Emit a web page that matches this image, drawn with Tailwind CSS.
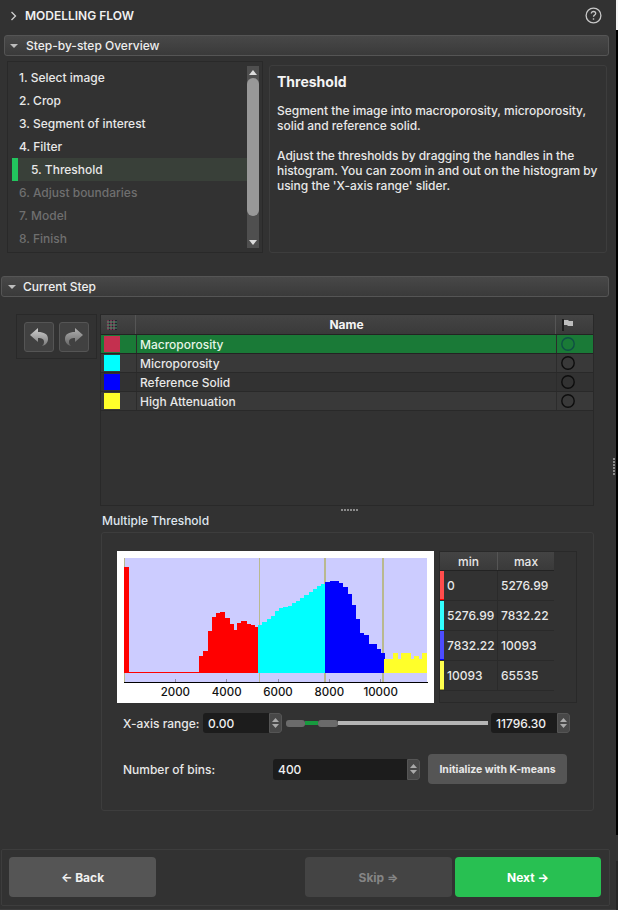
<!DOCTYPE html>
<html lang="en">
<head>
    <meta charset="UTF-8">
    <title>Modelling Flow</title>
    <script src="https://cdn.jsdelivr.net/npm/@tailwindcss/browser@4"></script>
</head>
<body class="bg-[#323232]">
    <div class="relative w-[618px] h-[910px] overflow-hidden bg-[#323232] text-[12px] leading-[15px] font-medium text-[#e8e8e8] font-['Inter','Liberation_Sans',sans-serif]">
        <!-- Title -->
        <div class="flex items-center h-[31px] pl-[10px] pr-[16px]">
            <svg width="8" height="10" viewBox="0 0 8 10" class="mr-[7px]"><path d="M1.5 1l4 4-4 4" fill="none" stroke="#cfcfcf" stroke-width="1.3"/></svg>
            <span class="font-semibold text-[#f0f0f0]">MODELLING FLOW</span>
            <svg width="17" height="17" viewBox="0 0 17 17" class="ml-auto"><circle cx="8.5" cy="8.5" r="7.4" fill="none" stroke="#c8c8c8" stroke-width="1.3"/><path d="M6.3 6.6c0-1.3 1-2.1 2.2-2.1s2.2.8 2.2 2c0 1.500-2.200 1.600-2.200 3.300" fill="none" stroke="#c8c8c8" stroke-width="1.300"/><rect x="7.800" y="11.300" width="1.400" height="1.400" fill="#c8c8c8"/></svg>
        </div>

        <!-- Step-by-step Overview -->
        <div class="flex items-center h-[21px] mt-[4px] ml-[4px] w-[605px] rounded-[3px] border border-[#555] bg-gradient-to-b from-[#484848] to-[#3a3a3a]">
            <svg width="8" height="4" viewBox="0 0 8 4" class="ml-[5px] mr-[8px]"><path d="M0 0h8L4 4z" fill="#bdbdbd"/></svg>
            <span class="text-[#eeeeee]">Step-by-step Overview</span>
        </div>
        <div class="flex mt-[5px] ml-[7px] h-[192px]">
            <div class="flex w-[256px] border border-[#292929] pl-[4px] pr-[3px] py-[4px]">
                <ul class="flex-1 flex flex-col">
                    <li class="h-[23px] shrink-0 flex items-center pl-[7px]">1. Select image</li>
                    <li class="h-[23px] shrink-0 flex items-center pl-[7px]">2. Crop</li>
                    <li class="h-[23px] shrink-0 flex items-center pl-[7px]">3. Segment of interest</li>
                    <li class="h-[23px] shrink-0 flex items-center pl-[7px]">4. Filter</li>
                    <li class="h-[23px] shrink-0 flex items-center pl-[13px] bg-[#394039] border-l-[6px] border-[#22c55e]">5. Threshold</li>
                    <li class="h-[23px] shrink-0 flex items-center pl-[7px] text-[#6f6f6f]">6. Adjust boundaries</li>
                    <li class="h-[23px] shrink-0 flex items-center pl-[7px] text-[#6f6f6f]">7. Model</li>
                    <li class="h-[23px] shrink-0 flex items-center pl-[7px] text-[#6f6f6f]">8. Finish</li>
                </ul>
                <div class="flex flex-col w-[12px] h-[182px] bg-[#4f4f4f]">
                    <div class="h-[12px] flex items-center justify-center"><svg width="8" height="5" viewBox="0 0 8 5"><path d="M4 0l4 5H0z" fill="#dcdcdc"/></svg></div>
                    <div class="h-[138px] rounded-[6px] bg-[#989898]"></div>
                    <div class="mt-auto h-[12px] flex items-center justify-center"><svg width="8" height="5" viewBox="0 0 8 5"><path d="M0 0h8L4 5z" fill="#dcdcdc"/></svg></div>
                </div>
            </div>
            <div class="w-[338px] h-[188px] mt-[4px] ml-[6px] rounded-[3px] border border-[#3d3d3d] pl-[7px] pt-[6px]">
                <h2 class="text-[14px] leading-[20px] font-bold text-[#f4f4f4]">Threshold</h2>
                <p class="mt-[11px] w-[320px] tracking-[-0.03px]">Segment the image into macroporosity, microporosity, solid and reference solid.</p>
                <p class="mt-[15px] w-[325px] tracking-[-0.03px]">Adjust the thresholds by dragging the handles in the histogram. You can zoom in and out on the histogram by using the 'X-axis range' slider.</p>
            </div>
        </div>

        <!-- Current Step -->
        <div class="flex items-center h-[21px] mt-[23px] ml-[1px] w-[608px] rounded-[3px] border border-[#555] bg-gradient-to-b from-[#484848] to-[#3a3a3a]">
            <svg width="8" height="4" viewBox="0 0 8 4" class="ml-[6px] mr-[7px]"><path d="M0 0h8L4 4z" fill="#bdbdbd"/></svg>
            <span class="text-[#eeeeee]">Current Step</span>
        </div>

        <div class="flex mt-[17px] ml-[16px]">
            <div class="flex gap-[5px] w-[81px] h-[45px] border border-[#292929] pl-[7px] pt-[7px]">
                <button class="flex items-center justify-center w-[30px] h-[30px] rounded-[3px] border border-[#555] bg-[#414141]">
                    <svg width="20" height="20" viewBox="0 0 20 20"><defs><linearGradient id="undoFill" x1="0" y1="0" x2="0" y2="1"><stop offset="0" stop-color="#cfcfcf"/><stop offset="1" stop-color="#7a7a7a"/></linearGradient></defs><path d="M9 1L1 8l8 7v-4c4 0 6 1 6 4 0 2-1 3-2 4 4-1 6-4 6-7 0-5-4-7-10-7z" fill="url(#undoFill)"/></svg>
                </button>
                <button class="flex items-center justify-center w-[30px] h-[30px] rounded-[3px] border border-[#555] bg-[#414141]">
                    <svg width="20" height="20" viewBox="0 0 20 20"><defs><linearGradient id="redoFill" x1="0" y1="0" x2="0" y2="1"><stop offset="0" stop-color="#b0b0b0"/><stop offset="1" stop-color="#666666"/></linearGradient></defs><path d="M11 1l8 7-8 7v-4c-4 0-6 1-6 4 0 2 1 3 2 4-4-1-6-4-6-7 0-5 4-7 10-7z" fill="url(#redoFill)"/></svg>
                </button>
            </div>
            <!-- Segment table -->
            <div class="ml-[3px] w-[494px] h-[192px] border border-[#292929]">
                <div class="flex h-[20px] border-b border-[#232323] bg-gradient-to-b from-[#444] to-[#3a3a3a]">
                    <div class="flex items-center w-[35px] pl-[6px] border-r border-[#555]">
                        <svg width="10" height="10" viewBox="0 0 10 10"><rect width="10" height="10" fill="#241f2e"/><path d="M1 0v10M4 0v10M7 0v10" stroke="#c04a70" stroke-width="1"/><path d="M0 2h10M0 5h10M0 8h10" stroke="#4a9a6a" stroke-width="1"/></svg>
                    </div>
                    <div class="flex-1 flex items-center justify-center pl-[2px] font-bold text-[#f4f4f4] border-r border-[#555]">Name</div>
                    <div class="flex items-center w-[37px] pl-[6px]">
                        <svg width="11" height="12" viewBox="0 0 11 12"><rect width="2" height="12" fill="#1c1c1c"/><path d="M2 1h4l1 1h4v5H6L5 6H2z" fill="#bdbdbd"/></svg>
                    </div>
                </div>
                <div class="flex h-[19px] bg-[#1a7a37] border-b border-[#232323]">
                    <div class="w-[36px] pl-[3px] pt-[1px] border-r border-[#2c2c2c]"><div class="w-[16px] h-[16px] bg-[#c4304f]"></div></div>
                    <div class="flex-1 flex items-center pl-[3px] text-[#e6f5e6]">Macroporosity</div>
                    <div class="flex items-center w-[37px] pl-[4px] border-l border-[#2c2c2c]"><svg width="14" height="14" viewBox="0 0 14 14"><circle cx="7" cy="7" r="6.200" fill="none" stroke="#0f4f45" stroke-width="1.400"/></svg></div>
                </div>
                <div class="flex h-[19px] bg-[#393939] border-b border-[#292929]">
                    <div class="w-[36px] pl-[3px] pt-[1px] border-r border-[#2c2c2c]"><div class="w-[16px] h-[16px] bg-[#00ffff]"></div></div>
                    <div class="flex-1 flex items-center pl-[3px]">Microporosity</div>
                    <div class="flex items-center w-[37px] pl-[4px] border-l border-[#2c2c2c]"><svg width="14" height="14" viewBox="0 0 14 14"><circle cx="7" cy="7" r="6.200" fill="none" stroke="#0d0d0d" stroke-width="1.400"/></svg></div>
                </div>
                <div class="flex h-[19px] bg-[#323232] border-b border-[#292929]">
                    <div class="w-[36px] pl-[3px] pt-[1px] border-r border-[#2c2c2c]"><div class="w-[16px] h-[16px] bg-[#0000ff]"></div></div>
                    <div class="flex-1 flex items-center pl-[3px]">Reference Solid</div>
                    <div class="flex items-center w-[37px] pl-[4px] border-l border-[#2c2c2c]"><svg width="14" height="14" viewBox="0 0 14 14"><circle cx="7" cy="7" r="6.200" fill="none" stroke="#0d0d0d" stroke-width="1.400"/></svg></div>
                </div>
                <div class="flex h-[19px] bg-[#393939] border-b border-[#292929]">
                    <div class="w-[36px] pl-[3px] pt-[1px] border-r border-[#2c2c2c]"><div class="w-[16px] h-[16px] bg-[#ffff2a]"></div></div>
                    <div class="flex-1 flex items-center pl-[3px]">High Attenuation</div>
                    <div class="flex items-center w-[37px] pl-[4px] border-l border-[#2c2c2c]"><svg width="14" height="14" viewBox="0 0 14 14"><circle cx="7" cy="7" r="6.200" fill="none" stroke="#0d0d0d" stroke-width="1.400"/></svg></div>
                </div>
            </div>
        </div>

        <!-- Splitter dots -->
        <div class="ml-[341px] mt-[3px] w-[17px] h-[2px] bg-[repeating-linear-gradient(90deg,#8a8a8a_0_2px,transparent_2px_3px)]"></div>

        <div class="ml-[102px] mt-[2px] h-[15px] text-[#dfe6ef]">Multiple Threshold</div>

        <!-- Threshold group -->
        <div class="ml-[101px] mt-[4px] w-[493px] h-[279px] rounded-[3px] border border-[#3d3d3d]">
            <div class="flex mt-[18px] ml-[15px]">
                <svg width="317" height="152" viewBox="51 33 951 456" shape-rendering="crispEdges" class="block">
                    <rect x="51" y="33" width="951" height="456" fill="#fff"/>
                    <rect x="72" y="54" width="909" height="372" fill="#ccccff"/>
                    <path fill="#b9b98f" d="M72 54h3v372h-3zM477 54h3v372h-3zM672 54h6v372h-6zM846 54h6v372h-6z"/>
                    <path fill="#ff0000" d="M73 399V81H87V396H297V348H309V333H324V273H336V231H348V219H360V216H375V234H390V252H402V270H411V249H423V243H441V252H453V255H465V261H474V399z"/>
                    <path fill="#00ffff" d="M474 399V255H486V246H501V237H513V228H525V213H537V204H549V201H564V198H576V189H588V183H600V174H612V165H627V156H639V147H651V138H663V132H675V399z"/>
                    <path fill="#0000ff" d="M675 399V126H690V123H717V129H729V141H744V162H756V195H768V237H780V279H792V285H807V312H831V327H843V339H855V399z"/>
                    <path fill="#ffff2a" d="M852 399V357H879V339H894V357H903V339H933V357H942V348H957V357H966V339H981V399z"/>
                    <path fill="#8f8fa8" d="M225 417h3v9h-3zM378 417h3v9h-3zM534 417h3v9h-3zM687 417h3v9h-3zM841 417h3v9h-3z"/>
                    <rect x="72" y="426" width="912" height="3" fill="#000"/>
                    <g font-family="Inter, sans-serif" font-size="34.500" font-weight="500" fill="#111" text-anchor="middle" shape-rendering="auto">
                        <text x="226" y="467">2000</text>
                        <text x="380" y="467">4000</text>
                        <text x="534" y="467">6000</text>
                        <text x="688" y="467">8000</text>
                        <text x="842" y="467">10000</text>
                    </g>
                </svg>
                <!-- Range table -->
                <div class="ml-[5px] w-[138px] h-[152px] border border-[#292929]">
                    <div class="flex h-[19px] w-[114px] border-b border-[#232323] bg-gradient-to-b from-[#444] to-[#3a3a3a]">
                        <div class="w-[58px] flex items-center justify-center border-r border-[#555]">min</div>
                        <div class="flex-1 flex items-center justify-center">max</div>
                    </div>
                    <div class="flex h-[30px] w-[114px] border-b border-[#2a2a2a]">
                        <div class="w-[4px] bg-[#ff4d4d] border-b border-[#ff0000]"></div>
                        <div class="w-[54px] flex items-center pl-[3px] border-r border-[#2a2a2a]">0</div>
                        <div class="flex-1 flex items-center pl-[3px]">5276.99</div>
                    </div>
                    <div class="flex h-[30px] w-[114px] border-b border-[#2a2a2a]">
                        <div class="w-[4px] bg-[#33ffff] border-b border-[#00ffff]"></div>
                        <div class="w-[54px] flex items-center pl-[3px] border-r border-[#2a2a2a]">5276.99</div>
                        <div class="flex-1 flex items-center pl-[3px]">7832.22</div>
                    </div>
                    <div class="flex h-[30px] w-[114px] border-b border-[#2a2a2a]">
                        <div class="w-[4px] bg-[#4d4dff] border-b border-[#0000ff]"></div>
                        <div class="w-[54px] flex items-center pl-[3px] border-r border-[#2a2a2a]">7832.22</div>
                        <div class="flex-1 flex items-center pl-[3px]">10093</div>
                    </div>
                    <div class="flex h-[30px] w-[114px] border-b border-[#2a2a2a]">
                        <div class="w-[4px] bg-[#ffff4d] border-b border-[#a0a020]"></div>
                        <div class="w-[54px] flex items-center pl-[3px] border-r border-[#2a2a2a]">10093</div>
                        <div class="flex-1 flex items-center pl-[3px]">65535</div>
                    </div>
                </div>
            </div>

            <!-- X-axis range -->
            <div class="flex items-center h-[20px] mt-[10px] ml-[21px]">
                <span class="w-[80px]">X-axis range:</span>
                <div class="flex w-[79px] h-[20px] rounded-[3px] bg-[#1c1c1c] pl-[5px] items-center text-[#f0f0f0]">
                    <span class="flex-1">0.00</span>
                    <div class="w-[13px] h-[20px] rounded-r-[3px] border border-[#555] bg-[#484848] flex flex-col items-center justify-center gap-[2px]">
                        <svg width="7" height="4" viewBox="0 0 7 4"><path d="M3.500 0L7 4H0z" fill="#aaa"/></svg>
                        <svg width="7" height="4" viewBox="0 0 7 4"><path d="M0 0h7L3.500 4z" fill="#aaa"/></svg>
                    </div>
                </div>
                <div class="flex items-center w-[202px] ml-[4px]">
                    <div class="w-[19px] h-[7px] rounded-[3px] bg-[#6b6b6b]"></div>
                    <div class="w-[13px] h-[4px] bg-[#179a3e]"></div>
                    <div class="w-[20px] h-[7px] rounded-[3px] bg-[#6b6b6b]"></div>
                    <div class="flex-1 h-[4px] bg-[#b5b5b5]"></div>
                </div>
                <div class="flex w-[79px] h-[20px] ml-[3px] rounded-[3px] bg-[#1c1c1c] pl-[5px] items-center text-[#f0f0f0]">
                    <span class="flex-1">11796.30</span>
                    <div class="w-[13px] h-[20px] rounded-r-[3px] border border-[#555] bg-[#484848] flex flex-col items-center justify-center gap-[2px]">
                        <svg width="7" height="4" viewBox="0 0 7 4"><path d="M3.500 0L7 4H0z" fill="#aaa"/></svg>
                        <svg width="7" height="4" viewBox="0 0 7 4"><path d="M0 0h7L3.500 4z" fill="#aaa"/></svg>
                    </div>
                </div>
            </div>

            <!-- Number of bins -->
            <div class="flex items-center h-[30px] mt-[21px] ml-[21px]">
                <span class="w-[150px]">Number of bins:</span>
                <div class="flex w-[147px] h-[21px] rounded-[3px] bg-[#1c1c1c] pl-[5px] items-center text-[#f0f0f0]">
                    <span class="flex-1">400</span>
                    <div class="w-[13px] h-[21px] rounded-r-[3px] border border-[#555] bg-[#484848] flex flex-col items-center justify-center gap-[2px]">
                        <svg width="7" height="4" viewBox="0 0 7 4"><path d="M3.500 0L7 4H0z" fill="#aaa"/></svg>
                        <svg width="7" height="4" viewBox="0 0 7 4"><path d="M0 0h7L3.500 4z" fill="#aaa"/></svg>
                    </div>
                </div>
                <button class="w-[139px] h-[30px] ml-[8px] rounded-[4px] bg-[#555555] text-[10.500px] font-bold text-[#e8e8e8]">Initialize with K-means</button>
            </div>
        </div>

        <!-- Footer -->
        <div class="flex mt-[38px] ml-[1px] w-[609px] h-[57px] border border-[#3d3d3d] rounded-[2px] pt-[7px] pl-[7px]">
            <button class="w-[147px] h-[40px] rounded-[4px] bg-[#555555] font-bold text-[#f0f0f0]">← Back</button>
            <button class="w-[147px] h-[40px] ml-[149px] rounded-[4px] bg-[#444444] font-bold text-[#858585]">Skip ⇒</button>
            <button class="w-[146px] h-[40px] ml-[3px] rounded-[4px] bg-[#28c052] font-bold text-white">Next →</button>
        </div>
        <div class="mt-[3px] w-[616px] h-[1px] bg-[#3d3d3d]"></div>

        <!-- Window splitter handle -->
        <div class="absolute left-[613px] top-[458px] w-[2px] h-[17px] bg-[repeating-linear-gradient(180deg,#8a8a8a_0_2px,transparent_2px_3px)]"></div>
        <!-- Neighbouring window at the right edge -->
        <div class="absolute left-[616px] top-0 w-[2px] h-[30px] bg-[#f4f4f4]"></div>
        <div class="absolute left-[616px] top-[30px] w-[2px] h-[805px] bg-black"></div>
        <div class="absolute left-[616px] top-[861px] w-[2px] h-[49px] bg-[#262626]"></div>
    </div>
</body>
</html>
